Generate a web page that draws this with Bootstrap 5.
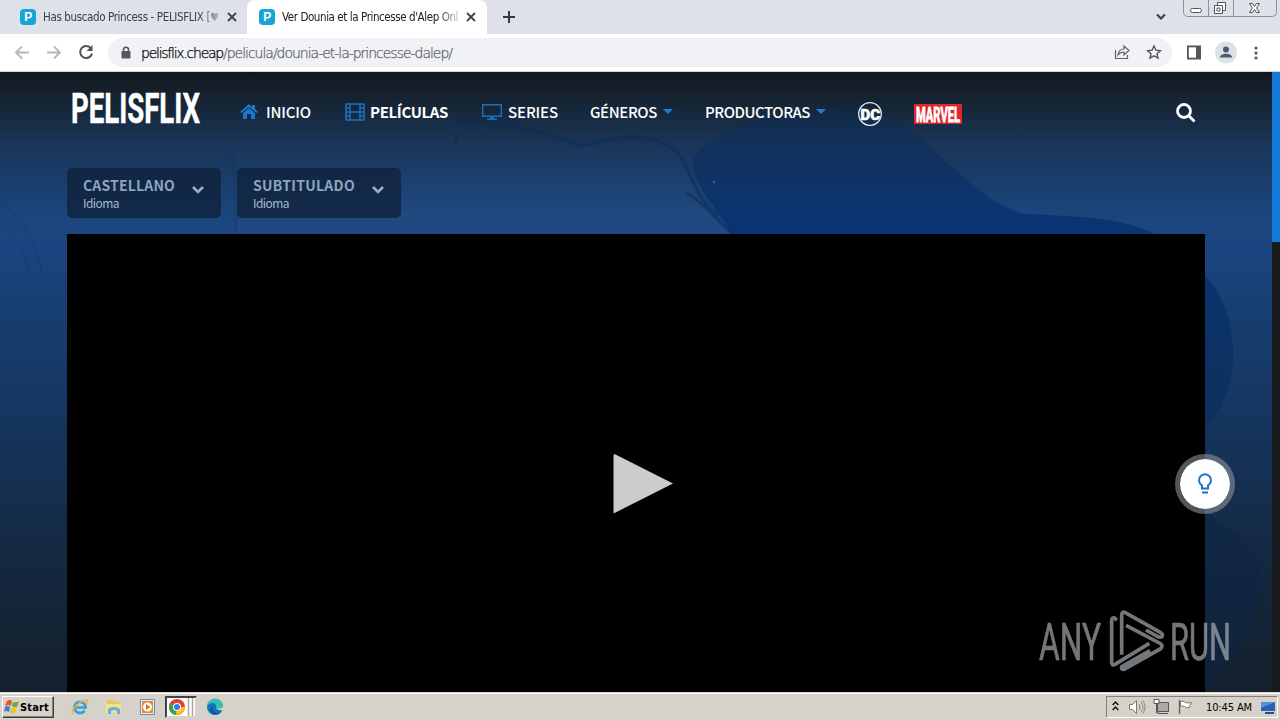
<!DOCTYPE html>
<html lang="es">
  <head>
    <meta charset="UTF-8" />
    <meta name="viewport" content="width=device-width, initial-scale=1.0" />
    <title>Ver Dounia et la Princesse d'Alep Online</title>
    <link
      href="https://cdn.jsdelivr.net/npm/bootstrap@5.3.0/dist/css/bootstrap.min.css"
      rel="stylesheet"
    />
    <style>
      body {
        width: 1280px;
        height: 720px;
        font-family: "DejaVu Sans Condensed", "DejaVu Sans", sans-serif;
        font-size: 11px;
        line-height: 1;
      }
      svg {
        display: block;
        flex: none;
        overflow: visible;
      }
      .fit {
        display: inline-block;
        white-space: nowrap;
      }
      /* browser window */
      .tab-strip {
        height: 34px;
        background: #dee1e8;
        color: #3c4043;
      }
      .browser-tab {
        height: 34px;
        padding-left: 20px;
        width: 247px;
      }
      .browser-tab.current {
        width: 240px;
        padding-left: 12px;
        background: #fff;
        border-radius: 8px 8px 0 0;
        color: #202124;
      }
      .tab-title {
        width: 176px;
        margin-left: 7px;
        font-size: 11.5px;
        line-height: 14px;
        -webkit-mask-image: linear-gradient(90deg, #000 88%, rgba(0, 0, 0, 0.25));
      }
      .window-buttons {
        width: 94px;
        height: 17px;
        margin-right: 3px;
        border: 1px solid #8c919b;
        border-top: 0;
        border-radius: 0 0 5px 5px;
      }
      .window-buttons > div + div {
        border-left: 1px solid #8c919b;
      }
      .minimize,
      .restore {
        width: 25px;
      }
      .toolbar {
        height: 38px;
        background: #fff;
        border-bottom: 1px solid #cfd4da;
        padding-left: 14px;
      }
      .omnibox {
        width: 1064px;
        height: 29px;
        margin-left: 14px;
        padding: 0 10px 0 11px;
        border-radius: 15px;
        background: #f0f2f5;
        font-size: 14px;
        font-family: "DejaVu Sans", sans-serif;
        font-weight: 200;
        color: #5f6368;
        -webkit-text-stroke: 0.25px;
      }
      .side-panel {
        margin-left: 15px;
      }
      .avatar {
        margin: 0 14px 0 7px;
      }
      /* site */
      .site {
        height: 620px;
        background: linear-gradient(#13181e 0, #15222f 24px, #1a3558 72px, #1b457c 140px, #1a4580 170px, #173c6c 270px, #15335a 370px, #14283f 490px, #14202c 620px);
        font-family: "Noto Sans CJK JP", "Noto Sans", sans-serif;
      }
      .backdrop,
      .scroll-track {
        position: absolute;
        top: 0;
      }
      .scroll-track {
        right: 0;
        width: 8px;
        height: 620px;
        background: #1a1b1f;
      }
      .scroll-thumb {
        height: 170px;
        background: #127bdc;
      }
      .site-nav {
        height: 96px;
        padding: 0 84px 0 71px;
        font-size: 15px;
        font-weight: 500;
        color: #fff;
      }
      .site-logo {
        margin-right: 39px;
      }
      .nav-links {
        margin-bottom: 17px;
      }
      .nav-links > * { margin-right: 8px; }
      .nav-links > :nth-child(2) { margin-right: 34px; }
      .nav-links > :nth-child(3) { margin-right: 5px; }
      .nav-links > :nth-child(4) { margin-right: 34px; }
      .nav-links > :nth-child(5) { margin-right: 6px; }
      .nav-links > :nth-child(6) { margin-right: 32px; }
      .nav-links > :nth-child(7), .nav-links > :nth-child(9) { margin-right: 6px; }
      .nav-links > :nth-child(8), .nav-links > :nth-child(10) { margin-right: 32px; }
      .nav-links > :nth-child(11) { margin-right: 32px; }
      .brand-mark {
        margin-top: 4px;
      }
      .search-icon {
        margin-bottom: 15px;
      }
      .languages {
        margin-left: 67px;
      }
      .lang-box {
        height: 50px;
        padding: 0 16px;
        border-radius: 5px;
        background: rgba(15, 32, 55, 0.75);
        color: #a6b8d0;
      }
      .lang-name {
        font-size: 14px;
        font-weight: 700;
        height: 15px;
        color: #8ea5c2;
      }
      .lang-kind {
        font-size: 12px;
        margin-top: 4px;
      }
      .lang-arrow {
        margin-bottom: 7px;
      }
      .player {
        width: 1138px;
        height: 458px;
        margin: 16px 0 0 67px;
        background: #000;
      }
      .play-icon {
        margin: 42px 0 0 14px;
      }
      .light-toggle {
        position: absolute;
        left: 1175px;
        top: 382px;
        width: 60px;
        height: 60px;
        border: 5px solid rgba(150, 155, 162, 0.55);
        background: #fff;
        background-clip: padding-box;
      }
      .watermark {
        position: absolute;
        left: 1020px;
        top: 530px;
      }
      /* desktop taskbar */
      .taskbar {
        height: 28px;
        background: #d6d2ca;
        box-shadow: inset 0 1px #d6d2ca, inset 0 2px #fff;
        padding: 2px 2px 0;
        color: #000;
      }
      .start-btn {
        width: 52px;
        height: 22px;
        border: 1px solid;
        border-color: #fff #404040 #404040 #fff;
        box-shadow: inset -1px -1px #808080;
        padding-left: 1px;
        font-weight: 700;
      }
      .launchers {
        margin-left: 17px;
        gap: 16px;
      }
      .task-active {
        width: 32px;
        height: 22px;
        margin-left: 8px;
        background: #fff;
        border: 2px solid #d6d2ca;
        border-top-color: #404040;
        border-left-color: #404040;
      }
      .edge-icon {
        margin-left: 9px;
      }
      .tray {
        width: 172px;
        height: 22px;
        border: 1px solid;
        border-color: #808080 #fff #fff #808080;
        padding-left: 5px;
      }
      .tray-speaker {
        margin-left: 9px;
      }
      .tray-network,
      .tray-flag {
        margin-left: 6px;
      }
      .tray-time {
        margin: 0 8px 0 12px;
      }
    </style>
  </head>
  <body class="overflow-hidden">
    <header>
      <div class="tab-strip d-flex">
        <div class="browser-tab d-flex align-items-center">
          <svg width="16" height="16"><rect width="16" height="16" rx="4" fill="#18a5d6" /><text x="4.2" y="12.3" font-size="12" font-weight="700" font-family="Liberation Sans" fill="#fff">P</text></svg>
          <div class="tab-title overflow-hidden"><span class="fit" data-w="176">Has buscado Princess - PELISFLIX [♥</span></div>
          <svg class="ms-1" width="16" height="10"><path d="M5 1l8 8M13 1L5 9" stroke="#3f4246" stroke-width="1.8" /></svg>
        </div>
        <div class="browser-tab current d-flex align-items-center">
          <svg width="16" height="16"><rect width="16" height="16" rx="4" fill="#18a5d6" /><text x="4.2" y="12.3" font-size="12" font-weight="700" font-family="Liberation Sans" fill="#fff">P</text></svg>
          <div class="tab-title overflow-hidden"><span class="fit" data-w="176">Ver Dounia et la Princesse d'Alep Onl</span></div>
          <svg class="ms-1" width="16" height="10"><path d="M5 1l8 8M13 1L5 9" stroke="#3f4246" stroke-width="1.8" /></svg>
        </div>
        <svg class="ms-3" width="12" height="34"><path d="M6 11v12M0 17h12" stroke="#36393d" stroke-width="2" /></svg>
        <svg class="ms-auto" width="12" height="34"><path d="M2 14.5l4 4 4-4" fill="none" stroke="#36393d" stroke-width="2" /></svg>
        <div class="window-buttons d-flex ms-3">
          <div class="minimize"><svg width="24" height="16"><rect x="6.500" y="8.500" width="11" height="4" rx="2" fill="#fff" stroke="#50555d" /></svg></div>
          <div class="restore"><svg width="24" height="16"><path d="M8.500 5V2.500h8v8H14M5.500 5.500h8v8h-8zM8 8h3v3H8z" fill="#fff" stroke="#50555d" /></svg></div>
          <div class="flex-fill"><svg width="42" height="16"><path d="M15.500 3.500h3l2 3 2-3h3l-3 4.500 3 4.500h-3l-2-3-2 3h-3l3-4.500z" fill="#fff" stroke="#50555d" /></svg></div>
        </div>
      </div>
      <div class="toolbar d-flex align-items-center">
        <svg width="16" height="16"><path d="M15 7.500H2M8 1.500l-6 6 6 6" fill="none" stroke="#b5b7ba" stroke-width="1.8" /></svg>
        <svg class="ms-3" width="16" height="16"><path d="M1 7.500h13M8 1.500l6 6-6 6" fill="none" stroke="#b5b7ba" stroke-width="1.8" /></svg>
        <svg class="ms-3" width="16" height="16"><path d="M13 3.500A6 6 0 1 0 14 8.500" fill="none" stroke="#505357" stroke-width="2" /><path d="M14.500 0v6h-6z" fill="#505357" /></svg>
        <div class="omnibox d-flex align-items-center">
          <svg width="14" height="16"><path d="M4.500 6.500V4.800a2.500 2.500 0 0 1 5 0v1.700" fill="none" stroke="#55585c" stroke-width="1.500" /><rect x="2.500" y="6" width="9" height="7.500" rx="1" fill="#55585c" /></svg>
          <span class="fit ms-2 text-black" data-w="82">pelisflix.cheap</span><span class="fit" data-w="229">/pelicula/dounia-et-la-princesse-dalep/</span>
          <svg class="ms-auto" width="16" height="16"><path d="M1.500 5v8.500h12V10M4 10c.5-4 2.500-6 6-6V1l5 4.500-5 4.500V7C7 7 5.500 8 4 10z" fill="none" stroke="#5f6368" stroke-width="1.200" /></svg>
          <svg class="ms-3" width="16" height="16"><path d="M8 1l1.900 4.200 4.500.5-3.400 3 1 4.500L8 10.900l-4 2.300 1-4.500-3.400-3 4.500-.5z" fill="none" stroke="#54575b" stroke-width="1.400" /></svg>
        </div>
        <svg class="side-panel" width="14" height="14"><rect x=".9" y=".4" width="12.200" height="12.200" fill="#fff" stroke="#54575b" stroke-width="1.800" /><path d="M9 .5h4v12H9z" fill="#54575b" /></svg>
        <svg class="avatar ms-3" width="20" height="22"><circle cx="9" cy="10.500" r="11" fill="#dce1e8" /><circle cx="9" cy="7.500" r="3" fill="#4c5a74" /><path d="M3 15.500c0-5 12-5 12 0z" fill="#4c5a74" /></svg>
        <svg width="12" height="16"><g fill="#54575b"><circle cx="5" cy="3" r="1.600" /><circle cx="5" cy="8" r="1.600" /><circle cx="5" cy="13" r="1.600" /></g></svg>
      </div>
    </header>

    <main class="site position-relative overflow-hidden">
      <svg class="backdrop" width="1272" height="620">
        <defs>
          <linearGradient id="shade" x1="0" y1="0" x2="0" y2="620" gradientUnits="userSpaceOnUse">
            <stop offset="0" stop-color="#002c6c" stop-opacity="0" />
            <stop offset=".12" stop-color="#06285a" stop-opacity=".4" />
            <stop offset=".25" stop-color="#05306f" stop-opacity=".8" />
            <stop offset=".6" stop-color="#092c57" stop-opacity=".6" />
            <stop offset="1" stop-color="#10202e" stop-opacity=".4" />
          </linearGradient>
          <linearGradient id="haze" x1="0" y1="0" x2="0" y2="1">
            <stop offset=".25" stop-color="#2d5687" stop-opacity="0" />
            <stop offset="1" stop-color="#2d5687" stop-opacity=".3" />
          </linearGradient>
        </defs>
        <path d="M238 50Q420 25 580 74Q650 52 684 86L694 110Q720 150 734 166H238z" fill="url(#haze)" />
        <path d="M734 166C720 140 690 110 693 88C710 55 790 35 860 32C930 55 965 125 1024 142C1085 144 1135 148 1157 164L1205 204C1245 245 1240 325 1205 356V166z" fill="url(#shade)" />
        <path d="M1205 440Q1262 475 1262 510Q1258 560 1205 618z" fill="#0b2343" opacity=".5" />
        <g fill="none" stroke="#0c2d59" stroke-width="3" opacity=".6">
          <path d="M456 72V50Q520 50 582 74Q655 52 681 85C695 112 698 128 718 143M687 121Q700 128 734 164" />
          <path d="M465 54v14M484 51l-2 16M228 55q8 45 8 110M0 150q20 12 30 55M0 130q34 25 42 72" stroke-width="2" opacity=".3" />
        </g>
        <circle cx="714" cy="110" r="1.500" fill="#2c5b91" />
      </svg>
      <div class="scroll-track"><div class="scroll-thumb"></div></div>

      <nav class="site-nav position-relative d-flex align-items-center">
        <svg class="site-logo mb-4" width="130" height="32"><text x="0" y="30.500" textLength="129" lengthAdjust="spacingAndGlyphs" font-family="Liberation Sans Narrow, Roboto" font-size="42" font-weight="700" fill="#fff" stroke="#fff" stroke-width=".5">PELISFLIX</text></svg>
        <div class="nav-links d-flex align-items-center">
          <svg width="18" height="16"><path d="M0 8l9-8 3 3V1h3v4l3 3-1.500 1L9 3 1.500 9z" fill="#1c78cf" /><path d="M3 9l6-5 6 5v6h-4v-5H7v5H3z" fill="#1c78cf" /></svg>
          <span class="fit" data-w="45">INICIO</span>
          <svg width="20" height="18"><path d="M1 1h18v16H1zM5 1v16M15 1v16M5 9h10M1 5h4M1 9h4M1 13h4M15 5h4M15 9h4M15 13h4" fill="none" stroke="#1c6fbe" stroke-width="1.500" /></svg>
          <b class="fit" data-w="78">PELÍCULAS</b>
          <svg width="20" height="16"><path d="M.7.7h18.600v11.600H.7zM5 15.200h10" fill="none" stroke="#1c6fbe" stroke-width="1.400" /><path d="M8 12h4v3H8z" fill="#1c6fbe" /></svg>
          <span class="fit" data-w="50">SERIES</span>
          <span class="fit" data-w="67">GÉNEROS</span>
          <svg width="10" height="5"><path d="M0 0h10L5 5z" fill="#1c7fd6" /></svg>
          <span class="fit" data-w="105">PRODUCTORAS</span>
          <svg width="10" height="5"><path d="M0 0h10L5 5z" fill="#1c7fd6" /></svg>
          <svg class="brand-mark" width="24" height="24"><circle cx="12" cy="12" r="11.300" fill="none" stroke="#e4edf5" stroke-width="1.300" /><text x="2.500" y="17.500" textLength="19.500" lengthAdjust="spacingAndGlyphs" font-family="Roboto" font-weight="900" font-size="15.500" fill="#fff" stroke="#fff" stroke-width=".6">DC</text></svg>
          <svg class="brand-mark" width="48" height="20"><path d="M0 0h48v20H0z" fill="#e0262d" /><text x="2" y="17.500" textLength="44" lengthAdjust="spacingAndGlyphs" font-family="Liberation Sans Narrow, Roboto" font-weight="700" font-size="21" fill="#fff" stroke="#fff" stroke-width=".9">MARVEL</text></svg>
        </div>
        <svg class="search-icon ms-auto" width="20" height="20"><circle cx="8" cy="8" r="6.500" fill="none" stroke="#fff" stroke-width="2.800" /><path d="M12.500 12.500l6 6" stroke="#fff" stroke-width="2.800" /></svg>
      </nav>

      <div class="languages position-relative d-flex gap-3">
        <div class="lang-box d-flex align-items-center">
          <div>
            <div class="lang-name"><span class="fit" data-w="92">CASTELLANO</span></div>
            <div class="lang-kind"><span class="fit" data-w="36">Idioma</span></div>
          </div>
          <svg class="lang-arrow ms-3" width="14" height="10"><path d="M2 2l5 5 5-5" fill="none" stroke="#9ab0c9" stroke-width="2.600" /></svg>
        </div>
        <div class="lang-box d-flex align-items-center">
          <div>
            <div class="lang-name"><span class="fit" data-w="102">SUBTITULADO</span></div>
            <div class="lang-kind"><span class="fit" data-w="36">Idioma</span></div>
          </div>
          <svg class="lang-arrow ms-3" width="14" height="10"><path d="M2 2l5 5 5-5" fill="none" stroke="#9ab0c9" stroke-width="2.600" /></svg>
        </div>
      </div>

      <section class="player position-relative d-flex align-items-center justify-content-center">
        <svg class="play-icon" width="60" height="60"><path d="M.5 1l1-1L60 29.500 1.500 59h-1z" fill="#ccc" /></svg>
      </section>

      <div class="light-toggle rounded-circle d-flex align-items-center justify-content-center">
        <svg width="16" height="22"><path d="M5 15.500v-3A6 6 0 1 1 11 12.500v3z" fill="none" stroke="#1976c5" stroke-width="2" /><path d="M5 19.500h6" stroke="#1976c5" stroke-width="2" /></svg>
      </div>

      <svg class="watermark" width="220" height="76" viewBox="0 0 220 76">
        <g fill="#bcc1c6" stroke="#bcc1c6" stroke-width=".7" opacity=".62" font-family="Liberation Sans Narrow, Roboto" font-size="51">
          <text x="19" y="57.500" textLength="62" lengthAdjust="spacingAndGlyphs">ANY</text>
          <text x="150" y="57.500" textLength="61" lengthAdjust="spacingAndGlyphs">RUN</text>
        </g>
        <g transform="translate(0 -162) scale(.33333)" fill="none" stroke="#bcc1c6" stroke-width="11" opacity=".62">
          <path d="M290 541L284 534Q275 532 275 542V668Q276 678 285 673L388 610" />
          <path d="M305 644V524Q306 513 316 518L422 578Q430 583 426 590Q421 594 412 589L378 570" />
          <path d="M318 556L422 611Q430 618 422 626L313 688Q303 690 305 680L390 632" />
        </g>
      </svg>
    </main>

    <footer class="taskbar d-flex align-items-center">
      <div class="start-btn d-flex align-items-center">
        <svg width="16" height="16"><path d="M3 2q3-2 5 0L7 7Q5 5 1 7z" fill="#e2582b" /><path d="M9 3q3 1 6-1l-2 6q-3 1-5-1z" fill="#71ae38" /><path d="M1 8q3-2 5 0l-1 5q-3-2-5 0z" fill="#3b7fcb" /><path d="M7 9q3 1 5-1l-1 6q-3 1-5-1z" fill="#f2bd27" /></svg>
        <span class="fit" data-w="29">Start</span>
      </div>
      <div class="launchers d-flex align-items-center">
        <svg width="18" height="18"><circle cx="9" cy="9.500" r="5.500" fill="none" stroke="#38a1dc" stroke-width="3" /><path d="M5 9.500h9" stroke="#38a1dc" stroke-width="2.500" /><path d="M14 11h4v2h-5z" fill="#d6d2ca" /><path d="M2 16C-2 13 9 2 16 2q2 1-1 4" fill="none" stroke="#e8b63a" stroke-width="1.500" /></svg>
        <svg width="18" height="18"><path d="M2 2h6l1 2h7v5H2z" fill="#e8c758" /><path d="M1 6h15v9H1z" fill="#f3df8c" /><path d="M3 16v-5q6-4 12 0v5h-3v-3q-3-2-6 0v3z" fill="#5fb0de" /></svg>
        <svg width="18" height="18"><path d="M1.500 1.500h14v15h-14z" fill="#e4eef7" stroke="#5b94c2" /><path d="M3 3h11v12H3z" fill="#f08a1c" /><circle cx="8.500" cy="9" r="4.500" fill="#fff" /><path d="M7 6v6l4.500-3z" fill="#e2730f" /></svg>
      </div>
      <div class="task-active d-flex align-items-center">
        <svg width="28" height="18"><circle cx="10" cy="9" r="8" fill="#e34034" /><path d="M10 9L3 5a8 8 0 0 0 7 12z" fill="#36a350" /><path d="M10 9h8a8 8 0 0 1-8 8l-1-1z" fill="#fbc116" /><circle cx="10" cy="9" r="4" fill="#fff" /><circle cx="10" cy="9" r="3" fill="#3979dd" /><path d="M21.500 0v18M25.500 0v18" stroke="#aaa69e" stroke-width="1.500" /></svg>
      </div>
      <svg class="edge-icon" width="18" height="18"><circle cx="9" cy="9" r="8" fill="#1673b9" /><path d="M1 9a8 8 0 0 1 16-1q0 4-5 4-2 0-2-2 1-5-4-5-3 0-5 4z" fill="#35c0b0" /><path d="M7 8q-2 6 4 7 4 0 5-2-4 5-9 3Q2 12 7 8z" fill="#0d4f9b" /><path d="M11 10q2 2 6-1v3q-5 1-6-2z" fill="#d6d2ca" /></svg>

      <div class="tray ms-auto d-flex align-items-center">
        <svg width="7" height="16"><path d="M.7 6l2.800-3 2.800 3M.7 11l2.800-3 2.800 3" fill="none" stroke="#111" stroke-width="1.500" /></svg>
        <svg class="tray-speaker" width="18" height="18"><path d="M1.500 6.500h3l4-4v13l-4-4h-3z" fill="#fff" stroke="#777" /><path d="M11 6q2 3 0 6M13 4q4 5 0 10M15 2.500q4 6 0 13" fill="none" stroke="#888" /></svg>
        <svg class="tray-network" width="18" height="18"><path d="M5.500 4.500h11v9h-11z" fill="#aaa" stroke="#555" /><path d="M7 15.500h9M4.500 5v10h3" fill="none" stroke="#555" /><path d="M2 1.500h5v4H2z" fill="#fff" stroke="#555" /></svg>
        <svg class="tray-flag" width="18" height="18"><path d="M3.500 2v14" stroke="#666" stroke-width="1.500" /><path d="M4.500 3.500q3-1 5 1 3 1 6 0-2 3-2 5-3 1-5-1-2-1-4 0z" fill="#fff" stroke="#777" /></svg>
        <span class="fit tray-time" data-w="46">10:45 AM</span>
        <svg width="16" height="14"><path d="M1 2h14v9H1z" fill="#2563ba" /><path d="M1 2h14L1 8z" fill="#5192de" /><path d="M5 13h9" stroke="#334e73" stroke-width="2" /></svg>
      </div>
    </footer>

    <script src="https://cdn.jsdelivr.net/npm/bootstrap@5.3.0/dist/js/bootstrap.bundle.min.js"></script>
    <script>
      // Spread each label over its design width
      document.querySelectorAll(".fit").forEach((el) => {
        const gap = (el.dataset.w - el.getBoundingClientRect().width) / el.textContent.length;
        el.style.letterSpacing = gap + "px";
      });
    </script>
  </body>
</html>
